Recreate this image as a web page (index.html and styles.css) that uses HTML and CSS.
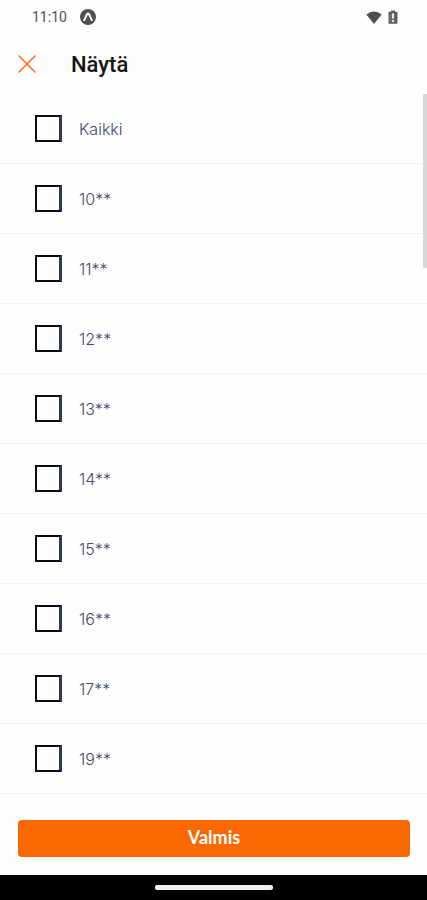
FILE: index.html
```html
<!DOCTYPE html>
<html lang="fi">
<head>
<meta charset="utf-8">
<meta name="viewport" content="width=device-width, initial-scale=1">
<title>Näytä</title>
<link rel="stylesheet" href="styles.css">
</head>
<body>
<div class="status">
  <time class="clock">11:10</time>
  <svg class="app-icon" viewBox="0 0 16 16" aria-hidden="true"><circle cx="8" cy="8" r="8" fill="#505050"/><path d="M4.2 11.2 7 5.2Q8 3.8 9 5.2l2.800 6" fill="none" stroke="#fff" stroke-width="2" stroke-linecap="round"/></svg>
  <svg class="wifi" viewBox="0 0 16 13" aria-hidden="true"><path d="M.3 3.600Q8-2.600 15.700 3.600L8 13Z" fill="#505050"/></svg>
  <svg class="battery" viewBox="0 0 10 14" aria-hidden="true"><path d="M3 .5h4v1.300h1.500q1 0 1 1V13q0 .8-.8.8H1.300q-.8 0-.8-.8V2.800q0-1 1-1H3Z" fill="#5c5c5c"/><path d="M4 3.500h2v5H4ZM4 10h2v2H4ZM2 5v7" fill="#fff" stroke="#aaa" stroke-width=".5"/></svg>
</div>
<header class="header">
  <button class="close" type="button" aria-label="Sulje"><svg class="close-icon" viewBox="0 0 18 18" aria-hidden="true"><path d="M.5.5l17 17M17.500.5l-17 17" stroke="#f86a1c" stroke-width="1.500"/></svg></button>
  <h1 class="title">Näytä</h1>
</header>
<main class="content">
  <ul class="list">
    <li><label class="row"><input class="box" type="checkbox">Kaikki</label></li>
    <li><label class="row"><input class="box" type="checkbox">10**</label></li>
    <li><label class="row"><input class="box" type="checkbox">11**</label></li>
    <li><label class="row"><input class="box" type="checkbox">12**</label></li>
    <li><label class="row"><input class="box" type="checkbox">13**</label></li>
    <li><label class="row"><input class="box" type="checkbox">14**</label></li>
    <li><label class="row"><input class="box" type="checkbox">15**</label></li>
    <li><label class="row"><input class="box" type="checkbox">16**</label></li>
    <li><label class="row"><input class="box" type="checkbox">17**</label></li>
    <li><label class="row"><input class="box" type="checkbox">19**</label></li>
  </ul>
  <div class="scroll-thumb"></div>
</main>
<footer class="actions">
  <button class="done" type="button">Valmis</button>
</footer>
<div class="system-nav"><span class="handle"></span></div>
</body>
</html>
```

FILE: styles.css
```css
* { box-sizing: border-box; }
body {
  margin: 0;
  min-height: 100vh;
  display: flex;
  flex-direction: column;
  background: #fefefe;
  font-family: Roboto, "Liberation Sans", sans-serif;
}
.status {
  display: flex;
  align-items: center;
  height: 34px;
  padding: 0 29px 0 32px;
}
.clock { font-size: 14px; color: #505050; }
.app-icon { width: 16px; height: 16px; margin-left: 13px; }
.wifi { width: 16px; height: 13px; margin-left: auto; }
.battery { width: 10px; height: 14px; margin-left: 6px; }
.header {
  display: flex;
  align-items: center;
  gap: 35px;
  height: 60px;
  padding: 0 18px;
}
.close {
  display: flex;
  padding: 0;
  border: 0;
  background: none;
}
.close-icon { width: 18px; height: 18px; }
.title {
  margin: 0;
  font-size: 22px;
  font-weight: 500;
  color: #151515;
}
.content { position: relative; flex: 1; }
.list { margin: 0; padding: 0; list-style: none; }
.row {
  display: flex;
  align-items: center;
  gap: 17px;
  height: 70px;
  padding: 0 35px;
  border-bottom: 1px solid #f3f3f3;
  font-family: Inter, Roboto, sans-serif;
  font-size: 16px;
  font-weight: 300;
  color: #45486a;
}
.box {
  appearance: none;
  width: 27px;
  height: 27px;
  margin: 0;
  border: 2px solid #0b0b12;
  border-right: 3px solid #2d3560;
}
.box:checked { background: #ff6900; }
.scroll-thumb {
  position: absolute;
  top: 0;
  right: 0;
  width: 4px;
  height: 24%;
  background: #d8d8d8;
}
.actions { padding: 0 17px 18px 18px; }
.done {
  display: block;
  width: 100%;
  height: 37px;
  padding: 0 0 3px;
  border: 0;
  border-radius: 4px;
  background: #fa6800;
  color: #fff;
  font-family: Lato, Roboto, sans-serif;
  font-size: 18px;
  font-weight: 700;
}
.system-nav {
  display: flex;
  justify-content: center;
  align-items: center;
  height: 25px;
  background: #000;
}
.handle {
  width: 118px;
  height: 5px;
  border-radius: 2px;
  background: #efefef;
}
```
